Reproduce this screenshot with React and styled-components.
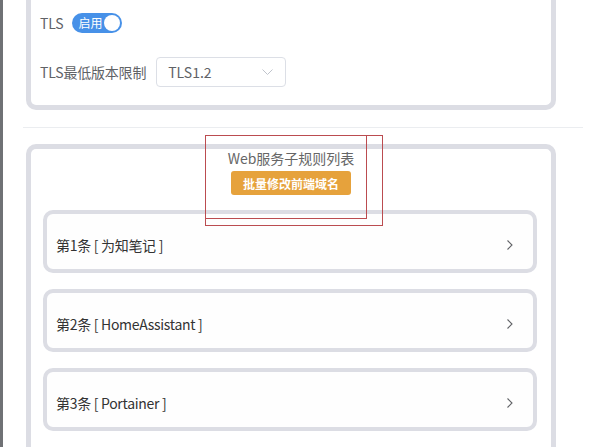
import styled, { createGlobalStyle } from "styled-components";

const GlobalStyle = createGlobalStyle`
body {
  margin: 0;
  background: #fff;
  font-family: "Noto Sans CJK SC", "Liberation Sans", sans-serif;
  line-height: 1.3;
}
* { box-sizing: border-box; }
`;

const Page = styled.div`
display: flex;
height: 447px;
overflow: hidden;
`;

const SideStrip = styled.div`
width: 3px;
flex-shrink: 0;
background: #6f7175;
`;

const Main = styled.div`
flex: 1;
padding: 0 7px 0 20px;
`;

const Card = styled.div`
position: relative;
margin: 0 27px 0 3px;
padding-bottom: ${(p) => (p.$cutBottom ? "40px" : "0")};
border: 5px solid #dcdde4;
border-top: ${(p) => (p.$cutTop ? "0" : "5px solid #dcdde4")};
border-bottom: ${(p) => (p.$cutBottom ? "0" : "5px solid #dcdde4")};
border-radius: ${(p) =>
  p.$cutTop ? "0 0 10px 10px" : p.$cutBottom ? "10px 10px 0 0" : "10px"};
background: #fff;
`;

const FormBody = styled.div`
display: flex;
flex-direction: column;
gap: 19px;
padding: 8px 9px 18px;
`;

const FormRow = styled.div`
display: flex;
align-items: center;
gap: ${(p) => p.$gap}px;
height: 30px;
`;

const Label = styled.span`
font-size: 14px;
color: #606266;
letter-spacing: -0.2px;
`;

const Switch = styled.div`
display: flex;
align-items: center;
justify-content: space-between;
width: 50px;
height: 20px;
padding: 0 2px 0 6px;
border-radius: 10px;
background: #4791e8;
color: #fff;
font-size: 12px;
`;

const Knob = styled.span`
width: 16px;
height: 16px;
border-radius: 50%;
background: #fff;
`;

const Select = styled.div`
display: flex;
align-items: center;
justify-content: space-between;
width: 130px;
height: 30px;
padding: 0 12px 0 11px;
border: 1px solid #dcdfe6;
border-radius: 4px;
font-size: 14px;
color: #606266;
`;

const Divider = styled.div`
height: 1px;
margin: 17px 0 16px;
background: #ebedf0;
`;

const ListHead = styled.div`
display: flex;
flex-direction: column;
align-items: center;
`;

const Title = styled.div`
font-size: 14px;
line-height: 18px;
color: #666;
`;

const WarnButton = styled.button`
margin-top: 4px;
height: 24px;
padding: 0 12px;
border: 0;
border-radius: 3px;
background: #e6a23c;
color: #fff;
font-family: inherit;
font-size: 12px;
font-weight: bold;
`;

const Mark = styled.div`
position: absolute;
left: 174px;
top: -14px;
width: ${(p) => p.$w}px;
height: ${(p) => p.$h}px;
border: 1px solid #bb4c50;
pointer-events: none;
`;

const RuleList = styled.div`
display: flex;
flex-direction: column;
gap: 16px;
padding: 15px 14px 0 12px;
`;

const RuleItem = styled.div`
display: flex;
align-items: center;
justify-content: space-between;
height: 63px;
padding: 7px 20px 0 9px;
border: 4px solid #dcdde4;
border-radius: 10px;
background: #fefefe;
font-size: 14px;
color: #333;
`;

const RuleName = styled.span`
letter-spacing: -0.3px;
`;

const Chevron = ({ dir, color }) =>
  dir === "down" ? (
    <svg width="11" height="6" viewBox="0 0 11 6">
      <polyline points="0.5,0.5 5.5,5.5 10.5,0.5" fill="none" stroke={color} strokeWidth="1" />
    </svg>
  ) : (
    <svg width="6" height="10" viewBox="0 0 6 10">
      <polyline points="0.5,0.5 5,5 0.5,9.5" fill="none" stroke={color} strokeWidth="1.1" />
    </svg>
  );

const rules = ["为知笔记", "HomeAssistant", "Portainer"];

export default function App() {
  return (
    <>
      <GlobalStyle />
      <Page>
        <SideStrip />
        <Main>
          <Card $cutTop>
            <FormBody>
              <FormRow $gap={9}>
                <Label>TLS</Label>
                <Switch>
                  启用
                  <Knob />
                </Switch>
              </FormRow>
              <FormRow $gap={10}>
                <Label>TLS最低版本限制</Label>
                <Select>
                  TLS1.2
                  <Chevron dir="down" color="#c0c4cc" />
                </Select>
              </FormRow>
            </FormBody>
          </Card>
          <Divider />
          <Card $cutBottom>
            <ListHead>
              <Title>Web服务子规则列表</Title>
              <WarnButton>批量修改前端域名</WarnButton>
            </ListHead>
            <Mark $w={162} $h={84} />
            <Mark $w={178} $h={91} />
            <RuleList>
              {rules.map((name, i) => (
                <RuleItem key={name}>
                  <RuleName>第{i + 1}条 [ {name} ]</RuleName>
                  <Chevron dir="right" color="#606266" />
                </RuleItem>
              ))}
            </RuleList>
          </Card>
        </Main>
      </Page>
    </>
  );
}
